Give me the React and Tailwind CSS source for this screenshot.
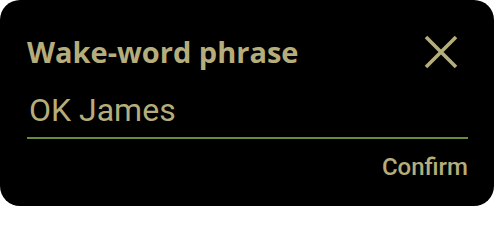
import React from "react";

function CloseIcon() {
  return (
    <svg width="34" height="34" viewBox="0 0 34 34" fill="none">
      <path d="M2 2L32 32M32 2L2 32" stroke="#b5ad7b" strokeWidth="3.6" />
    </svg>
  );
}

export default function App() {
  return (
    <div className="min-h-screen bg-white" style={{ fontFamily: "Roboto, 'Noto Sans', sans-serif" }}>
      <div className="flex h-[206px] w-[494px] flex-col rounded-[20px] bg-black pl-[27px] pr-[26px] pt-[35px] text-[#b5ad7b]">
        <div className="flex items-start justify-between">
          <h1 className="mt-[2px] font-['Open_Sans',sans-serif] text-[29px] leading-[29px] font-bold">
            Wake-word phrase
          </h1>
          <div className="mr-[10px]">
            <CloseIcon />
          </div>
        </div>
        <div className="mt-[25px] pl-[2px] text-[32px] leading-[32px]">OK James</div>
        <div className="mt-[11px] h-[2px] w-[441px] bg-[#6a8a3c]" />
        <div className="mt-[16px] flex justify-end">
          <button type="button" className="text-[24px] leading-[24px] font-medium text-[#b5ad7b]">
            Confirm
          </button>
        </div>
      </div>
    </div>
  );
}
